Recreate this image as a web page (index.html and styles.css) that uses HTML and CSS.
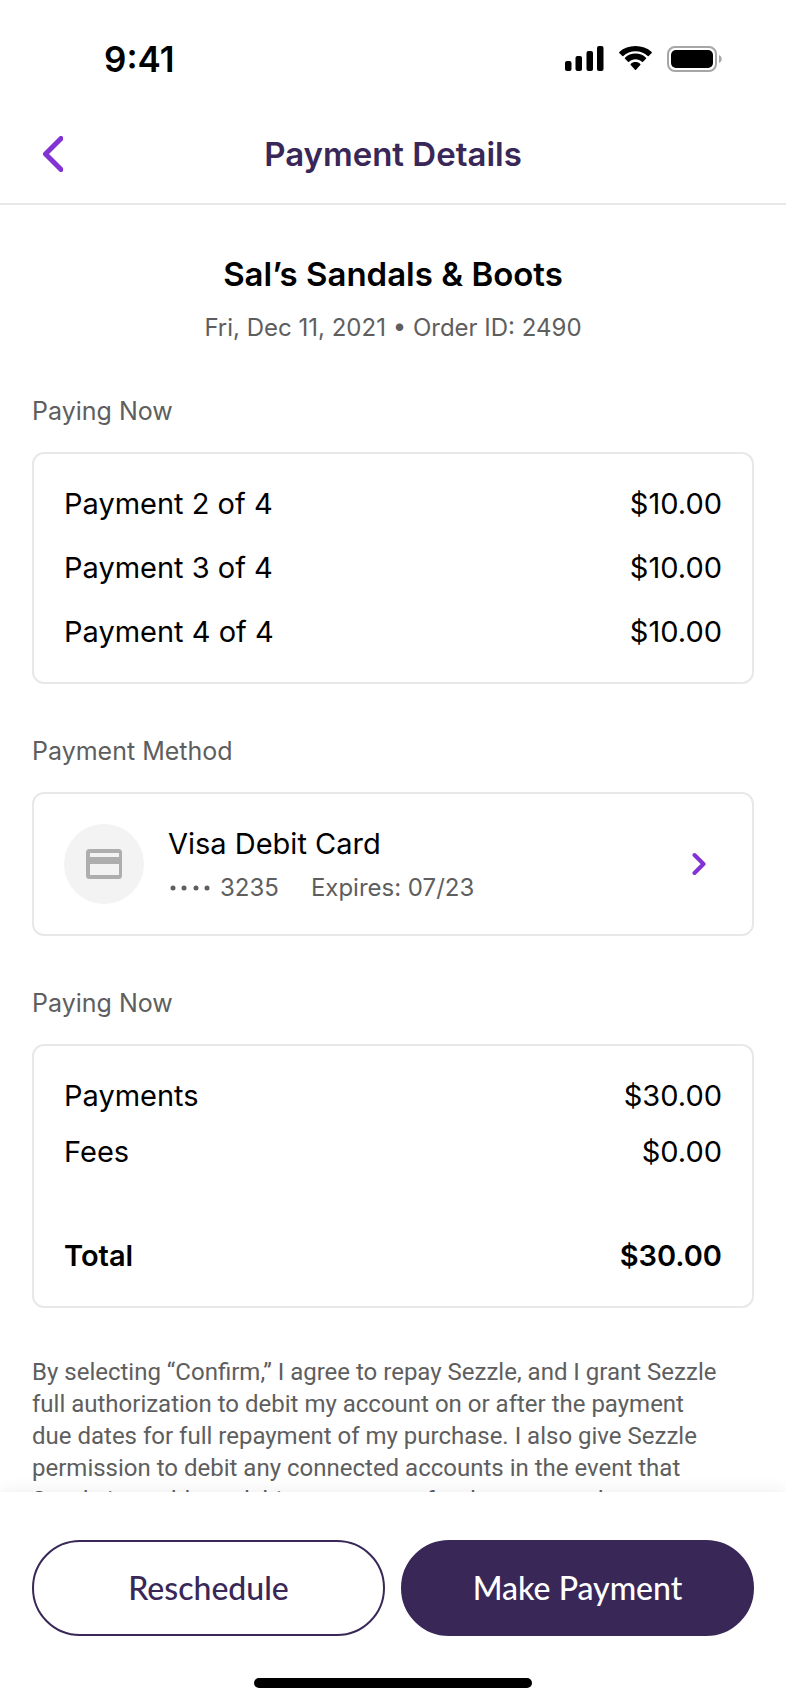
FILE: index.html
```html
<!DOCTYPE html>
<html lang="en">
<head>
    <meta charset="UTF-8">
    <meta name="viewport" content="width=device-width, initial-scale=1.0">
    <title>Payment Details</title>
    <link rel="stylesheet" href="styles.css">
</head>
<body>
    <div class="screen">
        <div class="status-bar">
            <span class="status-time">9:41</span>
            <div class="status-icons">
                <svg width="39" height="26" viewBox="0 0 39 26">
                    <rect x="0" y="15" width="6.500" height="10" rx="2"/>
                    <rect x="10.500" y="10" width="6.500" height="15" rx="2"/>
                    <rect x="21.500" y="5" width="6.500" height="20" rx="2"/>
                    <rect x="32" y="0" width="6.500" height="25" rx="2"/>
                </svg>
                <svg width="35" height="26" viewBox="0 0 35 26">
                    <path d="M17.5 5.2c4.7 0 9 1.800 12.200 4.800.3.300.7.300 1 0l3-3c.3-.3.3-.8 0-1.100C29.300 2.100 23.700 0 17.500 0S5.700 2.100 1.300 5.900c-.3.300-.3.800 0 1.100l3 3c.3.300.7.300 1 0C8.500 7 12.800 5.200 17.500 5.200z"/>
                    <path d="M17.500 13.300c2.500 0 4.800.9 6.500 2.500.3.300.7.300 1 0l3-3c.3-.3.3-.8 0-1.100-2.800-2.600-6.500-4.100-10.500-4.100S9.800 9.100 7 11.700c-.3.300-.3.800 0 1.100l3 3c.3.300.7.300 1 0 1.700-1.600 4-2.500 6.500-2.500z"/>
                    <path d="M22.300 18.900c.3-.3.3-.8 0-1-1.300-1.200-3-1.800-4.800-1.800s-3.500.6-4.800 1.800c-.3.200-.3.700 0 1l4.300 4.900c.3.300.7.300 1 0z"/>
                </svg>
                <svg width="55" height="26" viewBox="0 0 55 26">
                    <rect class="battery-case" x="1" y="1" width="48" height="24" rx="7"/>
                    <path class="battery-cap" d="M52 9v8c1.600-.7 2.700-2.200 2.700-4s-1.100-3.300-2.700-4z"/>
                    <rect x="4" y="4" width="42" height="18" rx="5"/>
                </svg>
            </div>
        </div>

        <header class="header">
            <button class="back-button" aria-label="Back">
                <svg width="20" height="36" viewBox="0 0 20 36"><path class="chevron" d="M18 2.500L2.500 18 18 33.500"/></svg>
            </button>
            <h1>Payment Details</h1>
        </header>

        <main class="content">
            <div class="order">
                <h2>Sal’s Sandals &amp; Boots</h2>
                <p>Fri, Dec 11, 2021 • Order ID: 2490</p>
            </div>

            <section class="section">
                <h3>Paying Now</h3>
                <div class="card payments">
                    <div class="row"><span>Payment 2 of 4</span><span>$10.00</span></div>
                    <div class="row"><span>Payment 3 of 4</span><span>$10.00</span></div>
                    <div class="row"><span>Payment 4 of 4</span><span>$10.00</span></div>
                </div>
            </section>

            <section class="section">
                <h3>Payment Method</h3>
                <button class="card method">
                    <span class="method-icon">
                        <svg width="36" height="30" viewBox="0 0 36 30"><path fill-rule="evenodd" d="M3.500 0h29A3.500 3.500 0 0 1 36 3.500v23a3.500 3.500 0 0 1-3.500 3.500h-29A3.500 3.500 0 0 1 0 26.500v-23A3.500 3.500 0 0 1 3.500 0zM4 4v4h29V4zM4 15v11h29V15z"/></svg>
                    </span>
                    <span class="method-text">
                        <span class="method-name">Visa Debit Card</span>
                        <span class="method-info">
                            <span class="card-number"><svg width="42" height="6" viewBox="0 0 42 6"><circle cx="5" cy="3" r="2.500"/><circle cx="16" cy="3" r="2.500"/><circle cx="28" cy="3" r="2.500"/><circle cx="39" cy="3" r="2.500"/></svg>3235</span>
                            <span>Expires: 07/23</span>
                        </span>
                    </span>
                    <svg class="method-arrow" width="14" height="24" viewBox="0 0 14 24"><path class="chevron" d="M2.500 3L11.500 12l-9 9"/></svg>
                </button>
            </section>

            <section class="section">
                <h3>Paying Now</h3>
                <div class="card summary">
                    <div class="row"><span>Payments</span><span>$30.00</span></div>
                    <div class="row"><span>Fees</span><span>$0.00</span></div>
                    <div class="row total"><span>Total</span><span>$30.00</span></div>
                </div>
            </section>

            <p class="legal">By selecting “Confirm,” I agree to repay Sezzle, and I grant Sezzle full authorization to debit my account on or after the payment due dates for full repayment of my purchase. I also give Sezzle permission to debit any connected accounts in the event that Sezzle is unable to debit my account for the amount due.</p>
        </main>

        <footer class="footer">
            <div class="actions">
                <button class="btn btn-outline">Reschedule</button>
                <button class="btn btn-solid">Make Payment</button>
            </div>
            <div class="home-indicator"></div>
        </footer>
    </div>
</body>
</html>
```

FILE: styles.css
```css
* {
    box-sizing: border-box;
}
body {
    margin: 0;
    font-family: Inter, "Liberation Sans", sans-serif;
    font-size: 29px;
    line-height: 40px;
    color: #000;
    background: #fff;
}
h1, h2, h3, p {
    margin: 0;
}
button {
    font: inherit;
    cursor: pointer;
}
svg {
    display: block;
}
.screen {
    display: flex;
    flex-direction: column;
    height: 100vh;
    overflow: hidden;
}

/* Status bar */
.status-bar {
    display: flex;
    justify-content: space-between;
    align-items: center;
    flex-shrink: 0;
    height: 118px;
    padding: 0 64px 0 104px;
}
.status-time {
    font-size: 35px;
    font-weight: 600;
}
.status-icons {
    display: flex;
    gap: 14px;
}
.battery-case {
    fill: none;
    stroke: #a6a6a6;
    stroke-width: 2;
}
.battery-cap {
    fill: #a6a6a6;
}

/* Header */
.header {
    display: grid;
    grid-template-columns: 48px 1fr 48px;
    align-items: center;
    flex-shrink: 0;
    height: 87px;
    padding: 0 32px 14px;
    border-bottom: 2px solid #e8e8e8;
}
.header h1 {
    font-size: 33px;
    font-weight: 600;
    text-align: center;
    color: #382757;
}
.back-button {
    padding: 0 11px;
    border: 0;
    background: none;
}
.chevron {
    fill: none;
    stroke: #8333d4;
    stroke-width: 4;
    stroke-linecap: round;
    stroke-linejoin: round;
}
.back-button .chevron {
    stroke-width: 5;
}

/* Content */
.content {
    flex: 1;
    min-height: 0;
    padding: 47px 32px 0;
    overflow: hidden;
}
.order {
    text-align: center;
}
.order h2 {
    font-size: 33px;
    font-weight: 600;
    line-height: 44px;
}
.order p {
    margin-top: 16px;
    font-size: 24px;
    line-height: 32px;
    color: #5e5e5e;
}
.section {
    margin-top: 50px;
}
.section h3 {
    margin-bottom: 24px;
    font-size: 25px;
    font-weight: 400;
    line-height: 34px;
    color: #5e5e5e;
}
.card {
    width: 100%;
    padding: 30px;
    border: 2px solid #e8e8e8;
    border-radius: 12px;
    background: #fff;
}
.row {
    display: flex;
    justify-content: space-between;
}
.payments {
    display: grid;
    gap: 24px;
}
.summary {
    display: grid;
    gap: 16px;
}
.total {
    margin-top: 48px;
    font-weight: 600;
}
.method {
    display: flex;
    align-items: center;
    color: #000;
    text-align: left;
}
.method-icon {
    display: flex;
    align-items: center;
    justify-content: center;
    width: 80px;
    height: 80px;
    border-radius: 50%;
    background: #f3f3f3;
    fill: #aeaeae;
}
.method-text {
    flex: 1;
    margin-left: 24px;
}
.method-name {
    display: block;
}
.method-info {
    display: flex;
    gap: 32px;
    margin-top: 8px;
    font-size: 24px;
    line-height: 32px;
    color: #5e5e5e;
    fill: #5e5e5e;
}
.card-number {
    display: flex;
    align-items: center;
    gap: 10px;
}
.method-arrow {
    margin-right: 16px;
}
.legal {
    margin-top: 48px;
    padding-right: 32px;
    font-family: Roboto, sans-serif;
    font-size: 24px;
    line-height: 32px;
    color: #5e5e5e;
}

/* Footer */
.footer {
    display: flex;
    flex-direction: column;
    align-items: center;
    flex-shrink: 0;
    padding: 48px 32px 16px;
    background: #fff;
    box-shadow: 0 0 16px rgba(0, 0, 0, 0.08);
}
.actions {
    display: grid;
    grid-template-columns: 1fr 1fr;
    gap: 16px;
    width: 100%;
    margin-bottom: 42px;
}
.btn {
    height: 96px;
    border: 2px solid #382757;
    border-radius: 48px;
    font-family: Lato, sans-serif;
    font-size: 32px;
    font-weight: 500;
}
.btn-outline {
    color: #382757;
    background: #fff;
}
.btn-solid {
    color: #fff;
    background: #382757;
}
.home-indicator {
    width: 278px;
    height: 10px;
    border-radius: 5px;
    background: #000;
}
```
